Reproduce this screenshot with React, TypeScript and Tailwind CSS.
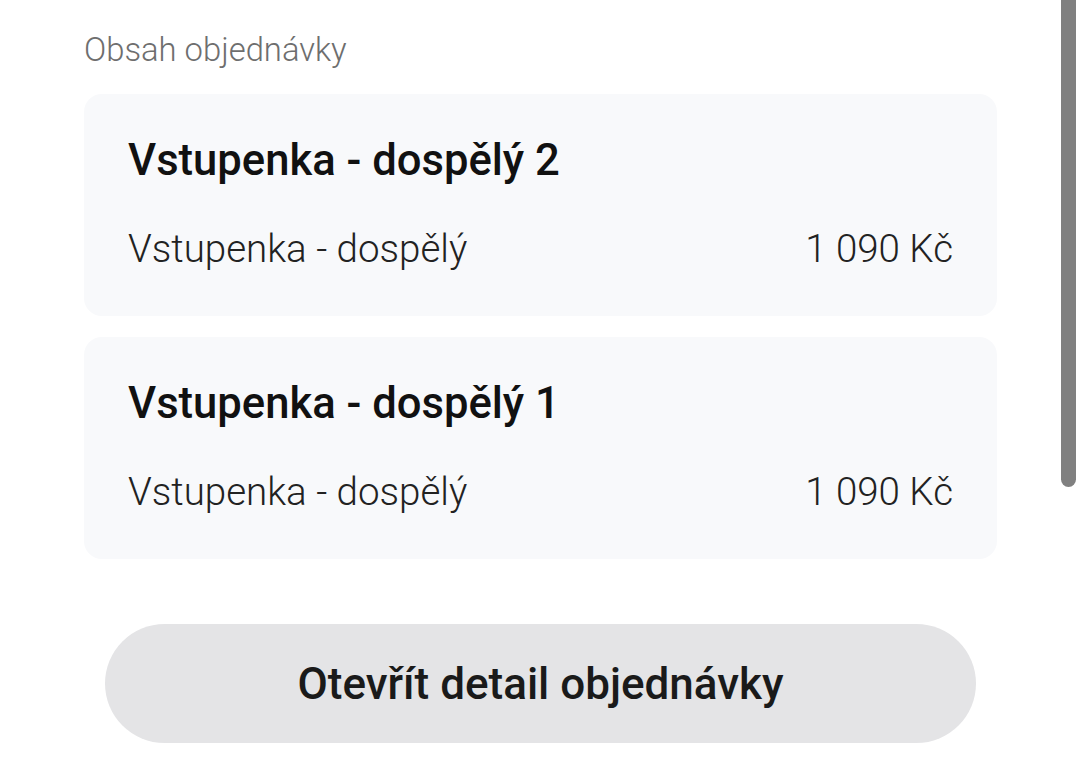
import React from "react";

const items = [
  { title: "Vstupenka - dospělý 2", name: "Vstupenka - dospělý", price: "1 090 Kč" },
  { title: "Vstupenka - dospělý 1", name: "Vstupenka - dospělý", price: "1 090 Kč" },
];

export default function App() {
  return (
    <div
      className="relative w-[1080px] h-[764px] overflow-hidden bg-white"
      style={{ fontFamily: "Roboto, 'Noto Sans', sans-serif" }}
    >
      <div className="flex flex-col pl-[84px] pr-[83px] pt-[30px]">
        <div className="text-[32.8px] leading-[40px] font-light text-[#6e6e6e]">
          Obsah objednávky
        </div>
        <div className="mt-[24px] flex flex-col gap-[21px]">
          {items.map((it, i) => (
            <div
              key={i}
              className="h-[222px] rounded-[18px] bg-[#f8f9fb] px-[44px] pt-[39px]"
            >
              <div className="text-[43.6px] leading-[56px] font-medium text-[#111111]">
                {it.title}
              </div>
              <div className="mt-[40px] flex justify-between text-[38.5px] leading-[40px] font-light text-[#222222]">
                <span>{it.name}</span>
                <span>{it.price}</span>
              </div>
            </div>
          ))}
        </div>
        <div className="mt-[65px] mx-[21px] h-[119px] rounded-full bg-[#e4e4e6] flex items-center justify-center">
          <span className="text-[44px] font-medium text-[#1a1a1a]">
            Otevřít detail objednávky
          </span>
        </div>
      </div>
      <div className="absolute right-[4px] top-0 w-[15px] h-[487px] rounded-b-full bg-[#808080]" />
    </div>
  );
}
